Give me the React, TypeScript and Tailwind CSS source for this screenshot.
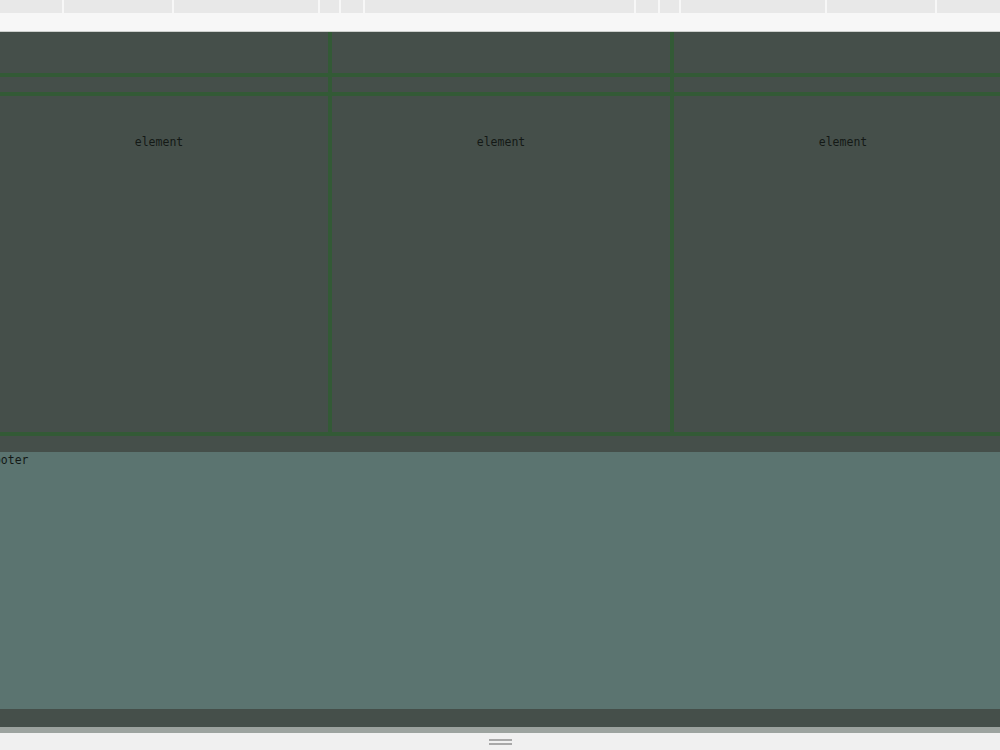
const rulerSegments = [64, 110, 146, 21, 24, 271, 24, 21, 146, 110];

function Cell({ children }: { children?: React.ReactNode }) {
  return (
    <div className="bg-[#454f4a] flex justify-center">
      {children}
    </div>
  );
}

export default function App() {
  const mono = { fontFamily: '"DejaVu Sans Mono", "Liberation Mono", monospace' };

  return (
    <div className="w-[1000px] h-[750px] overflow-hidden flex flex-col bg-[#f0f0f0]" style={mono}>
      {/* ruler strip */}
      <div className="h-[13px] flex bg-[#e8e8e8] shrink-0">
        {rulerSegments.map((w, i) => (
          <div key={i} className="h-full border-r-2 border-[#f7f7f7]" style={{ width: w }} />
        ))}
        <div className="flex-1" />
      </div>

      {/* toolbar */}
      <div className="h-[19px] bg-[#f7f7f7] border-b border-[#cdd0cd] shrink-0" />

      {/* page body */}
      <div className="flex-1 flex flex-col bg-[#454f4a] overflow-hidden">
        <div className="ml-[-10px] w-[1022px] grid grid-cols-3 grid-rows-[41px_15px_336px] gap-[4px] bg-[#335a36] pb-[4px]">
          <Cell />
          <Cell />
          <Cell />
          <Cell />
          <Cell />
          <Cell />
          <Cell>
            <span className="mt-[39px] text-[11.5px] leading-[14px] text-[#141916]">element</span>
          </Cell>
          <Cell>
            <span className="mt-[39px] text-[11.5px] leading-[14px] text-[#141916]">element</span>
          </Cell>
          <Cell>
            <span className="mt-[39px] text-[11.5px] leading-[14px] text-[#141916]">element</span>
          </Cell>
        </div>

        <div className="h-[16px] shrink-0" />

        {/* footer */}
        <div className="h-[257px] shrink-0 bg-[#5b7470] ml-[-13px] pt-[1px] text-[11.5px] leading-[14px] text-[#141916]">
          Footer
        </div>

        <div className="h-[18px] shrink-0 bg-[#454f4a]" />
        <div className="h-[6px] shrink-0 bg-[#9ca39f]" />
      </div>

      {/* resize handle */}
      <div className="h-[17px] shrink-0 bg-[#f0f0f0] flex flex-col items-center justify-center gap-[2px]">
        <div className="w-[23px] h-[2px] bg-[#a8a8a8]" />
        <div className="w-[23px] h-[2px] bg-[#a8a8a8]" />
      </div>
    </div>
  );
}
